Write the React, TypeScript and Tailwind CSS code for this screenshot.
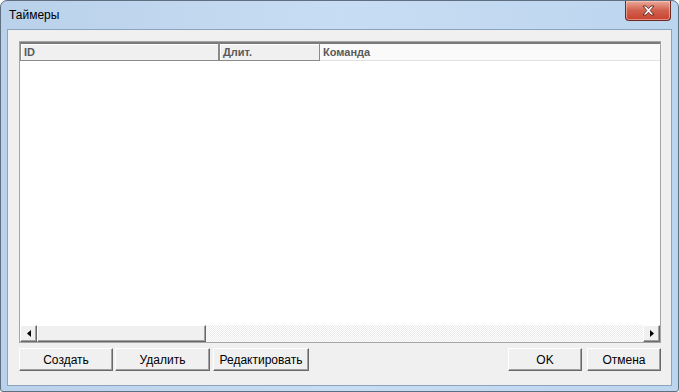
const font = { fontFamily: '"Liberation Sans", Arial, sans-serif' };

const HeaderCell = ({ label, w }: { label: string; w: string }) => (
  <div
    className={`${w} h-full flex items-center pl-[3px] border border-[#8a8a8a] border-t-2 border-t-[#7a7a7a] bg-[#f0f0f0] shadow-[inset_1px_1px_0_#ffffff] text-[11px] font-bold text-[#5a5a5a]`}
  >
    {label}
  </div>
);

const ArrowBtn = ({ dir }: { dir: "left" | "right" }) => (
  <div className="w-[17px] h-full flex items-center justify-center bg-[#f0f0f0] border border-t-white border-l-white border-r-[#696969] border-b-[#696969] shadow-[inset_-1px_-1px_0_#a0a0a0]">
    <svg width="4" height="7" viewBox="0 0 4 7">
      {dir === "left" ? (
        <path d="M4 0 L0 3.5 L4 7 Z" fill="#000" />
      ) : (
        <path d="M0 0 L4 3.5 L0 7 Z" fill="#000" />
      )}
    </svg>
  </div>
);

const Btn = ({ label, w }: { label: string; w: string }) => (
  <button
    className={`${w} h-[23px] bg-[#f0f0f0] border border-t-white border-l-white border-r-[#696969] border-b-[#696969] shadow-[inset_-1px_-1px_0_#a0a0a0] text-[12px] text-black`}
  >
    {label}
  </button>
);

export default function App() {
  return (
    <div
      className="w-[679px] h-[392px] flex flex-col bg-gradient-to-r from-[#b9d1ea] via-[#c7ddf3] to-[#bcd5ee] border border-[#5f6f82] rounded-t-[7px] rounded-b-[3px] overflow-hidden"
      style={font}
    >
      <div className="h-[28px] flex items-start justify-between">
        <div className="pl-[8px] pt-[8px] text-[12px] text-black leading-none">
          Таймеры
        </div>
        <div className="mr-[7px] w-[46px] h-[20px] rounded-b-[4px] border border-t-0 border-[#6a2a20] bg-gradient-to-b from-[#e9a999] via-[#d0604d] to-[#c8412e] flex items-center justify-center shadow-[inset_0_0_0_1px_rgba(255,220,210,0.5)]">
          <svg width="13" height="11" viewBox="0 0 13 11">
            <path
              d="M1 1 L4 1 L6.5 3.8 L9 1 L12 1 L8.2 5.5 L12 10 L9 10 L6.5 7.2 L4 10 L1 10 L4.8 5.5 Z"
              fill="#ffffff"
              stroke="#5a2a22"
              strokeWidth="0.9"
              strokeLinejoin="round"
            />
          </svg>
        </div>
      </div>
      <div className="mx-[6px] mb-[5px] flex-1 flex flex-col bg-[#f0f0f0] border border-[#8ca3bd] pl-[11px] pr-[10px] pt-[11px]">
        <div className="h-[302px] flex flex-col bg-white border border-[#a5a5a5]">
          <div className="h-[19px] flex">
            <HeaderCell label="ID" w="w-[199px]" />
            <HeaderCell label="Длит." w="w-[101px]" />
            <div className="flex-1 h-full flex items-center pl-[3px] border-t-2 border-t-[#7a7a7a] border-b border-b-[#e3e3e3] bg-[#fafafa] text-[11px] font-bold text-[#5a5a5a]">
              Команда
            </div>
          </div>
          <div className="flex-1 bg-white" />
          <div className="h-[17px] flex bg-[#f4f4f4]">
            <ArrowBtn dir="left" />
            <div className="w-[169px] h-full bg-[#f0f0f0] border border-t-white border-l-white border-r-[#696969] border-b-[#696969] shadow-[inset_-1px_-1px_0_#a0a0a0]" />
            <div className="flex-1 h-full bg-[repeating-conic-gradient(#ffffff_0_25%,#ebebeb_0_50%)] bg-[length:2px_2px]" />
            <ArrowBtn dir="right" />
          </div>
        </div>
        <div className="mt-[5px] flex">
          <Btn label="Создать" w="w-[94px]" />
          <div className="w-[2px]" />
          <Btn label="Удалить" w="w-[95px]" />
          <div className="w-[3px]" />
          <Btn label="Редактировать" w="w-[96px]" />
          <div className="flex-1" />
          <Btn label="OK" w="w-[74px]" />
          <div className="w-[5px]" />
          <Btn label="Отмена" w="w-[74px]" />
        </div>
      </div>
    </div>
  );
}
